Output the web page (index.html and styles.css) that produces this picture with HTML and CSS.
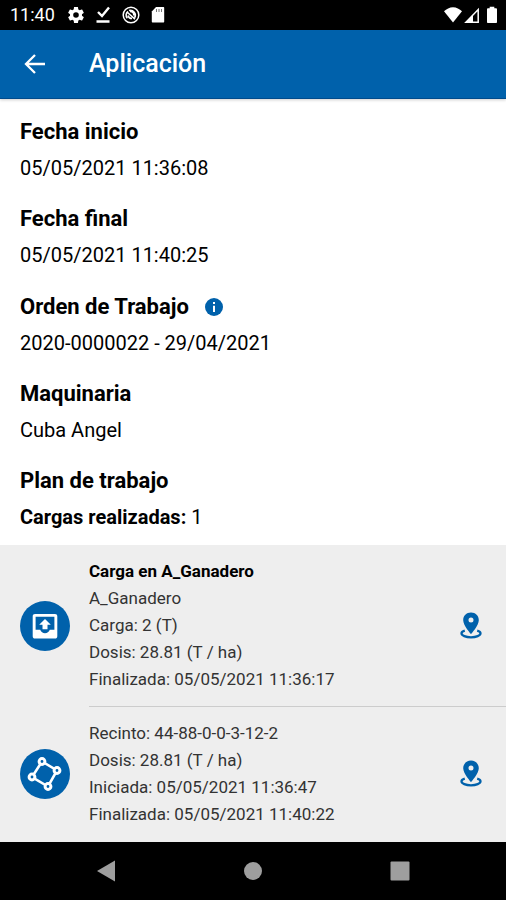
FILE: index.html
```html
<!DOCTYPE html>
<html lang="es">
<head>
  <meta charset="utf-8">
  <meta name="viewport" content="width=device-width, initial-scale=1">
  <title>Aplicación</title>
  <link rel="stylesheet" href="styles.css">
</head>
<body>
  <svg class="sprite" aria-hidden="true">
    <symbol id="pin" viewBox="0 0 22 28">
      <path d="M11 .6C6.400.6 3.200 3.900 3.200 8.200 3.200 13.500 11 22 11 22s7.800-8.500 7.800-13.800C18.800 3.900 15.600.6 11 .6zm0 10a2.500 2.500 0 1 1 0-5 2.500 2.500 0 0 1 0 5z" fill="currentColor" fill-rule="evenodd"/>
      <path d="M4.800 18.600c-2.100.6-3.300 1.600-3.300 2.700 0 2.200 4.200 4 9.500 4s9.500-1.800 9.500-4c0-1.100-1.200-2.100-3.300-2.700" fill="none" stroke="currentColor" stroke-width="2.300"/>
    </symbol>
  </svg>

  <div class="status">
    <time class="clock">11:40</time>
    <div class="status-left">
      <svg width="16" height="18" viewBox="2 1 20 22"><path d="M19.430 12.980c.04-.32.070-.64.070-.98s-.03-.66-.07-.98l2.110-1.650c.19-.15.240-.42.120-.64l-2-3.460c-.12-.22-.39-.3-.61-.22l-2.490 1c-.52-.4-1.080-.73-1.690-.98l-.38-2.650C14.460 2.180 14.250 2 14 2h-4c-.25 0-.46.180-.49.420l-.38 2.650c-.61.250-1.170.59-1.690.98l-2.490-1c-.23-.09-.49 0-.61.220l-2 3.460c-.13.220-.07.490.120.640l2.110 1.650c-.04.320-.07.650-.07.980s.03.660.070.980l-2.110 1.650c-.19.150-.24.420-.12.640l2 3.460c.12.220.39.300.61.220l2.490-1c.52.400 1.080.73 1.690.98l.38 2.650c.03.240.24.420.49.420h4c.25 0 .46-.18.490-.42l.38-2.650c.61-.25 1.170-.59 1.690-.98l2.490 1c.23.090.49 0 .61-.22l2-3.460c.12-.22.070-.49-.12-.64l-2.110-1.650zM12 15.500a3.500 3.500 0 1 1 0-7 3.500 3.500 0 0 1 0 7z" fill="currentColor"/></svg>
      <svg width="16" height="18" viewBox="0 0 16 18"><path d="M3 6l4 4 7-8.500M1.500 15.500h13" fill="none" stroke="currentColor" stroke-width="2.400"/></svg>
      <svg width="18" height="18" viewBox="0 0 18 18" fill="none" stroke="currentColor"><circle cx="9" cy="9" r="7.800" stroke-width="1.500"/><path d="M5.300 12.200A4.700 4.700 0 0 1 6 5.300M7 4.500a5 5 0 0 1 5.700 7.200M5.500 6.500l7.500 6.700M8 5.500c2.500 0 4 1.500 3.800 4M6 9.500c.5 2 2 3 4 3" stroke-width="1.600"/></svg>
      <svg width="14" height="18" viewBox="0 0 14 18"><path d="M5 1h7.200c.6 0 1 .4 1 1v13.500c0 .6-.4 1-1 1H1.800c-.6 0-1-.4-1-1V5.500z" fill="currentColor"/><path d="M5.500 3v3M8 3v3M10.500 3v3" stroke="#777"/></svg>
    </div>
    <div class="status-right">
      <svg width="20" height="18" viewBox="0 0 20 18"><path d="M1 5.200C3.500 3 6.500 1.200 10 1.200S16.500 3 19 5.200L10 16.500z" fill="currentColor"/></svg>
      <svg width="17" height="18" viewBox="0 0 17 18"><path d="M15.200 3.500v12.700H3z" fill="none" stroke="currentColor" stroke-width="1.500"/><path d="M1.500 17L10 8.500V17z" fill="currentColor"/></svg>
      <svg class="battery" width="12" height="18" viewBox="0 0 12 18"><path d="M3.700.7h4.600v1.500h1.500c.8 0 1.200.5 1.200 1.200v12.500c0 .7-.4 1.100-1.200 1.100H2.200C1.400 17 1 16.600 1 15.900V3.400c0-.7.4-1.200 1.200-1.200h1.500z" fill="currentColor"/></svg>
    </div>
  </div>

  <header class="toolbar">
    <button class="back" type="button" aria-label="Atrás">
      <svg width="22" height="22" viewBox="0 0 22 22"><path d="M21 11H2.500M11 2L2 11l9 9" fill="none" stroke="currentColor" stroke-width="2.300"/></svg>
    </button>
    <h1>Aplicación</h1>
  </header>

  <main>
    <div class="details">
      <section>
        <h2>Fecha inicio</h2>
        <p>05/05/2021 11:36:08</p>
      </section>
      <section>
        <h2>Fecha final</h2>
        <p>05/05/2021 11:40:25</p>
      </section>
      <section>
        <div class="heading-row">
          <h2>Orden de Trabajo</h2>
          <button class="info" type="button" aria-label="Información">
            <svg width="18" height="18" viewBox="0 0 18 18"><circle cx="9" cy="9" r="9" fill="currentColor"/><path d="M9 4v2M9 7.700V14" stroke="#fff" stroke-width="2"/></svg>
          </button>
        </div>
        <p>2020-0000022 - 29/04/2021</p>
      </section>
      <section>
        <h2>Maquinaria</h2>
        <p>Cuba Angel</p>
      </section>
      <section>
        <h2>Plan de trabajo</h2>
        <p><strong>Cargas realizadas:</strong> 1</p>
      </section>
    </div>

    <ul class="tasks">
      <li class="task">
        <span class="badge">
          <svg width="50" height="50" viewBox="0 0 50 50"><path d="M15 13h20c1.400 0 2.300.9 2.300 2.300v19.900c0 1.400-.9 2.300-2.300 2.300H15c-1.400 0-2.300-.9-2.300-2.300V15.300c0-1.400.9-2.300 2.300-2.300zm.6 2.800v13h4.600c.9 2.200 2.600 3.500 4.800 3.500s3.900-1.300 4.800-3.500h4.600v-13z" fill="#fff" fill-rule="evenodd"/><path d="M25 18l5.800 5.800h-3.300v4.400h-5v-4.400h-3.300z" fill="#fff"/></svg>
        </span>
        <div class="task-body">
          <div class="task-text">
            <h3>Carga en A_Ganadero</h3>
            <p>A_Ganadero</p>
            <p>Carga: 2 (T)</p>
            <p>Dosis: 28.81 (T / ha)</p>
            <p>Finalizada: 05/05/2021 11:36:17</p>
          </div>
          <button class="locate" type="button" aria-label="Ver ubicación de la carga"><svg width="22" height="28"><use href="#pin"/></svg></button>
        </div>
      </li>
      <li class="task">
        <span class="badge">
          <svg width="50" height="50" viewBox="0 0 50 50" fill="none" stroke="#fff"><path d="M22 12.500L37 21.500 28 37.500 12 28z" stroke-width="2.600"/><g fill="#0061ab" stroke-width="3"><circle cx="22" cy="12.500" r="2.900"/><circle cx="37" cy="21.500" r="2.900"/><circle cx="28" cy="37.500" r="2.900"/><circle cx="12" cy="28" r="2.900"/></g></svg>
        </span>
        <div class="task-body">
          <div class="task-text">
            <p>Recinto: 44-88-0-0-3-12-2</p>
            <p>Dosis: 28.81 (T / ha)</p>
            <p>Iniciada: 05/05/2021 11:36:47</p>
            <p>Finalizada: 05/05/2021 11:40:22</p>
          </div>
          <button class="locate" type="button" aria-label="Ver ubicación del recinto"><svg width="22" height="28"><use href="#pin"/></svg></button>
        </div>
      </li>
    </ul>
  </main>

  <nav class="system-nav">
    <button type="button" aria-label="Volver"><svg width="22" height="22" viewBox="0 0 22 22"><path d="M20 .5v21L2 11z" fill="currentColor"/></svg></button>
    <button type="button" aria-label="Inicio"><svg width="22" height="22" viewBox="0 0 22 22"><circle cx="11" cy="11" r="9" fill="currentColor"/></svg></button>
    <button type="button" aria-label="Recientes"><svg width="22" height="22" viewBox="0 0 22 22"><rect x="1.500" y="1.500" width="19" height="19" rx="1" fill="currentColor"/></svg></button>
  </nav>
</body>
</html>
```

FILE: styles.css
```css
* {
  box-sizing: border-box;
}

body {
  margin: 0;
  min-height: 100vh;
  display: flex;
  flex-direction: column;
  background: #fff;
  color: #000;
  font-family: Roboto, "Liberation Sans", sans-serif;
}

h1, h2, h3, p, ul {
  margin: 0;
  padding: 0;
}

svg {
  display: block;
}

button {
  display: block;
  padding: 0;
  border: 0;
  background: none;
  color: inherit;
  cursor: pointer;
}

.sprite {
  position: absolute;
  width: 0;
  height: 0;
}

.status {
  display: flex;
  align-items: center;
  height: 30px;
  padding: 0 8px 0 10px;
  background: #000;
  color: #fff;
}

.clock {
  font-size: 18px;
  line-height: 30px;
}

.status-left {
  display: flex;
  gap: 11px;
  margin-left: 13px;
}

.status-right {
  display: flex;
  margin-left: auto;
}

.battery {
  margin-left: 6px;
}

.toolbar {
  display: flex;
  align-items: center;
  gap: 43px;
  height: 69px;
  padding: 0 24px;
  border-bottom: 1px solid #004b8c;
  box-shadow: 0 1px 3px rgba(0, 0, 0, 0.2);
  background: #0061ab;
  color: #fff;
}

h1 {
  font-size: 25px;
  font-weight: 500;
  line-height: 32px;
}

main {
  flex: 1;
  display: flex;
  flex-direction: column;
}

.details {
  flex: 1;
  display: flex;
  flex-direction: column;
  justify-content: space-between;
  gap: 16px;
  padding: 18px 20px 14px;
}

h2 {
  font-size: 22px;
  font-weight: 700;
  line-height: 30px;
}

.details p {
  margin-top: 7px;
  font-size: 20px;
  line-height: 28px;
}

.heading-row {
  display: flex;
  align-items: center;
  gap: 16px;
}

.info,
.locate {
  color: #0061ab;
}

.tasks {
  padding-bottom: 1px;
  background: #eee;
  list-style: none;
}

.task {
  display: flex;
  align-items: center;
  gap: 19px;
  padding-left: 20px;
}

.badge {
  flex: none;
  border-radius: 50%;
  background: #0061ab;
}

.task-body {
  flex: 1;
  display: flex;
  align-items: center;
  justify-content: space-between;
  padding: 13px 24px 13px 0;
}

.task + .task .task-body {
  border-top: 1px solid #ccc;
}

.task-text {
  color: #333;
  font-size: 17px;
  line-height: 27px;
}

h3 {
  color: #000;
  font-size: 17px;
  font-weight: 700;
  line-height: 27px;
}

.system-nav {
  display: grid;
  grid-template-columns: repeat(3, 1fr);
  align-items: center;
  justify-items: center;
  height: 58px;
  padding: 0 33px;
  background: #000;
  color: #9e9e9e;
}
```
